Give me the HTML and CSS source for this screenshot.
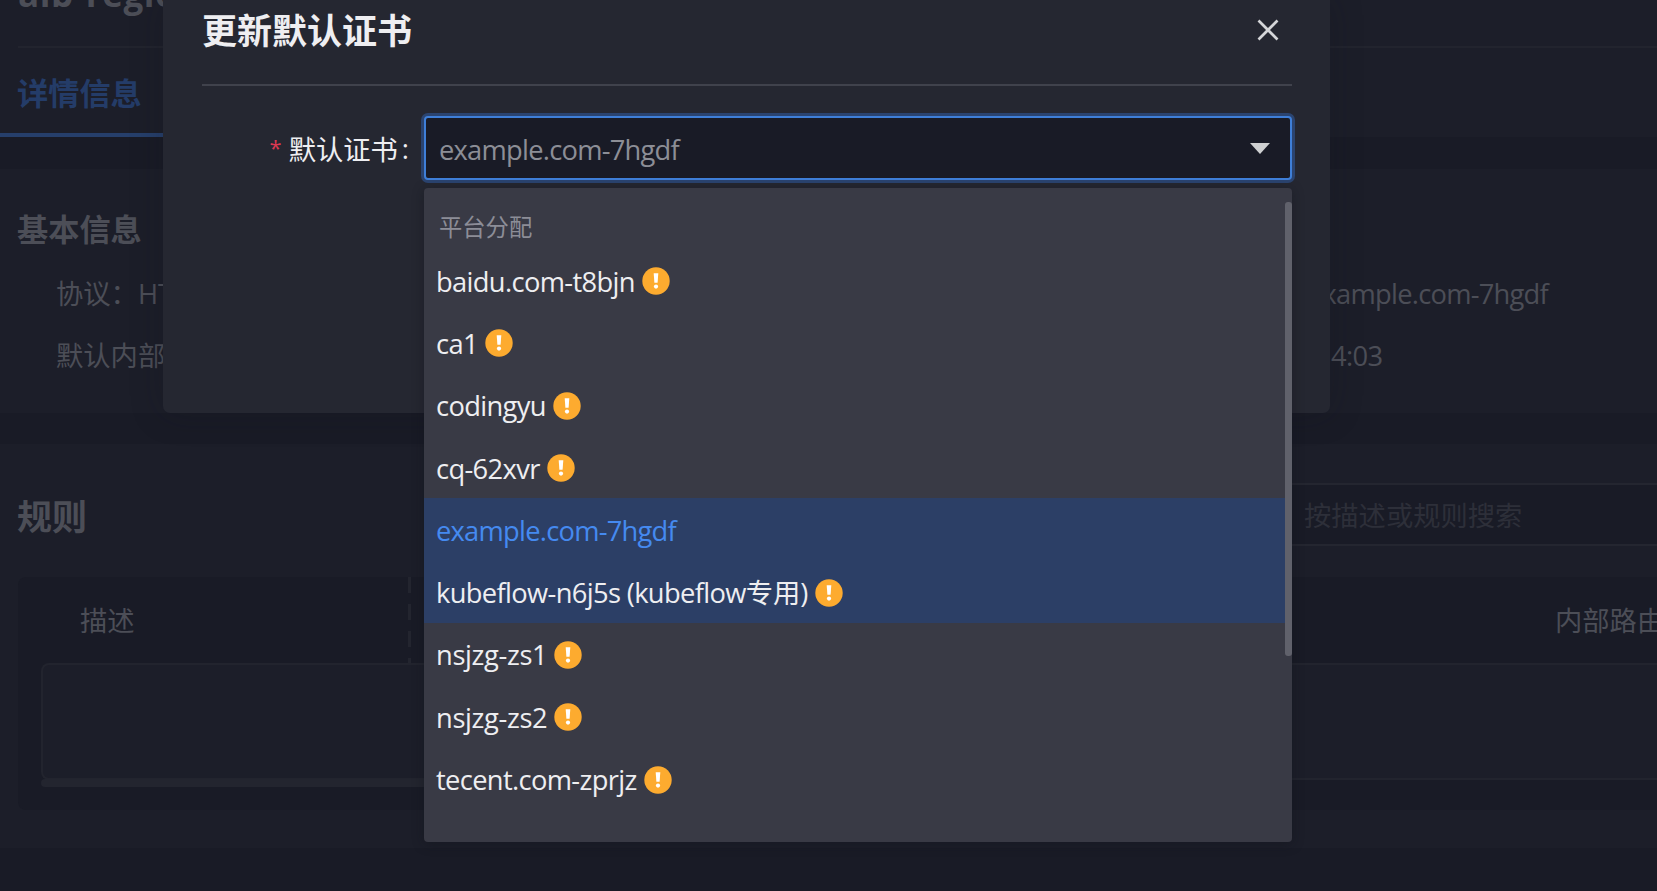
FILE: index.html
```html
<!DOCTYPE html>
<html lang="zh-CN">
<head>
<meta charset="utf-8">
<title>更新默认证书</title>
<link rel="stylesheet" href="styles.css">
</head>
<body>
<svg width="0" height="0" class="defs"><defs>
<symbol id="warn" viewBox="0 0 28 28"><circle cx="14" cy="14" r="13.7" fill="#fdab2f"/><path d="M11.7 6.3h4.6l-.7 9.4h-3.2z" fill="#fff"/><circle cx="14" cy="19.6" r="2.1" fill="#fff"/></symbol>
</defs></svg>
<div class="page">
  <section class="panel head">
    <h1 class="name">alb-regio</h1>
    <nav class="tabs"><span class="tab">详情信息</span></nav>
  </section>
  <section class="panel info">
    <h2 class="section-title">基本信息</h2>
    <div class="fields">
      <div class="field"><span>协议：</span><span>HT</span></div>
      <div class="field right"><span class="latin host">example.com-7hgdf</span></div>
      <div class="field">默认内部</div>
      <div class="field right time"><span class="latin">4:03</span></div>
    </div>
  </section>
  <section class="panel rules">
    <div class="rules-bar">
      <h2 class="rules-title">规则</h2>
      <div class="search">按描述或规则搜索</div>
    </div>
    <div class="table">
      <div class="table-head"><span class="col-desc">描述</span><span class="col-route">内部路由</span></div>
      <div class="table-body"></div>
      <div class="track"></div>
    </div>
  </section>
</div>
<div class="modal">
  <header class="modal-head">
    <h2 class="modal-title">更新默认证书</h2>
    <svg class="close" viewBox="0 0 24 24"><path d="M2.5 2.5l19 19M21.5 2.5l-19 19"/></svg>
  </header>
  <div class="form-row">
    <label class="label"><span class="star">*</span><span>默认证书</span><span class="colon">:</span></label>
    <div class="select"><span class="latin host">example.com-7hgdf</span><svg class="caret" viewBox="0 0 20 11"><path d="M0 0h20L10 11z"/></svg></div>
  </div>
</div>
<div class="menu">
  <div class="group">平台分配</div>
  <div class="item"><span class="latin">baidu.com-t8bjn</span><svg class="warn"><use href="#warn"/></svg></div>
  <div class="item"><span class="latin">ca1</span><svg class="warn"><use href="#warn"/></svg></div>
  <div class="item"><span class="latin">codingyu</span><svg class="warn"><use href="#warn"/></svg></div>
  <div class="item"><span class="latin">cq-62xvr</span><svg class="warn"><use href="#warn"/></svg></div>
  <div class="item active selected"><span class="latin host">example.com-7hgdf</span></div>
  <div class="item active"><span class="latin">kubeflow-n6j5s (kubeflow<span class="cjk">专用</span>)</span><svg class="warn"><use href="#warn"/></svg></div>
  <div class="item"><span class="latin loose">nsjzg-zs1</span><svg class="warn"><use href="#warn"/></svg></div>
  <div class="item"><span class="latin loose">nsjzg-zs2</span><svg class="warn"><use href="#warn"/></svg></div>
  <div class="item"><span class="latin">tecent.com-zprjz</span><svg class="warn"><use href="#warn"/></svg></div>
  <div class="thumb"></div>
</div>
</body>
</html>
```
FILE: styles.css
```css
* { box-sizing: border-box; }
body {
  margin: 0;
  width: 1657px;
  height: 891px;
  overflow: hidden;
  position: relative;
  background: #191b26;
  font-family: "Open Sans", "Noto Sans CJK SC", sans-serif;
  font-size: 27.3px;
  color: #4c4e57;
}
h1, h2 { margin: 0; font-weight: 700; white-space: nowrap; }
.defs { position: absolute; }
.latin { letter-spacing: -0.65px; white-space: nowrap; }
.host { letter-spacing: -0.75px; }
.loose { letter-spacing: -0.35px; }
.cjk { letter-spacing: 0; line-height: 0; }

.page { display: flex; flex-direction: column; height: 891px; overflow: hidden; }
.panel { background: #1c1e29; flex: none; }
.head { height: 137px; margin-bottom: 32px; display: flex; flex-direction: column; }
.name { flex: none; height: 54px; margin: -6px 0 0 18px; padding-bottom: 52px; border-bottom: 2px solid #22242e; font-size: 35px; line-height: 0; letter-spacing: 0.6px; }
.tabs { height: 89px; display: flex; }
.tab { width: 163px; padding-left: 17px; border-bottom: 4px solid #263f6b; color: #243c68; font-size: 31.2px; font-weight: 700; line-height: 91px; height: 89px; white-space: nowrap; }

.info { height: 244px; margin-bottom: 31px; padding: 30px 0 0 18px; }
.section-title { font-size: 31.2px; line-height: 61px; height: 62px; margin-left: -1px; }
.fields { display: grid; grid-template-columns: 1252px 1fr; grid-auto-rows: 62px; padding: 2px 0 0 38px; }
.field { line-height: 62px; white-space: nowrap; }
.time { padding-left: 23px; }

.rules { height: 404px; padding: 39px 0 38px 18px; display: flex; flex-direction: column; }
.rules-bar { display: flex; height: 63px; margin-bottom: 31px; justify-content: space-between; align-items: center; }
.rules-title { font-size: 35px; line-height: 63px; padding-top: 3px; margin-left: -1px; }
.search { width: 373px; height: 63px; padding-left: 20px; border: 2px solid #242630; border-width: 2px 0; background: #191b26; color: #2d2f39; line-height: 62px; }
.table { height: 233px; background: #191b26; border-radius: 8px 0 0 8px; padding-left: 23px; }
.table-head { height: 86px; display: flex; justify-content: space-between; line-height: 88px; overflow: hidden; background: repeating-linear-gradient(to bottom, #23252f 0 16px, transparent 16px 27px) 367px 0 / 3px 100% no-repeat; }
.col-desc { padding-left: 39px; }
.col-route { width: 102px; white-space: nowrap; }
.table-body { height: 117px; background: #1c1e29; border: 2px solid #22242e; border-right: 0; border-radius: 8px 0 0 8px; }
.track { width: 500px; height: 8px; margin-top: -1px; border-radius: 4px; background: #23252f; }

.modal { position: absolute; left: 163px; top: 0; width: 1167px; height: 413px; padding: 0 38px 0 39px; background: #252731; border-radius: 0 0 7px 7px; box-shadow: 0 0 32px rgba(18, 20, 28, 0.25); color: #eeeef1; }
.modal-head { height: 86px; border-bottom: 2px solid #40424c; display: flex; justify-content: space-between; padding: 0 12px 0 0; }
.modal-title { font-size: 35px; line-height: 62px; }
.close { width: 24px; height: 24px; margin-top: 18px; fill: none; stroke: #d5d6d9; stroke-width: 2.7; }
.form-row { display: flex; margin-top: 30px; height: 64px; }
.label { width: 222px; display: flex; justify-content: flex-end; line-height: 67px; padding-right: 15px; white-space: nowrap; }
.star { color: #dc3852; font-size: 22px; margin-right: 7px; line-height: 63px; }
.colon { margin-left: 4px; line-height: 65px; }
.select { width: 868px; height: 64px; padding: 2px 20px 0 13px; display: flex; justify-content: space-between; align-items: center; border: 2.5px solid #3f7fd8; border-radius: 4px; box-shadow: 0 0 0 3px #2b4470; background: #191b26; color: #8c8e96; }
.caret { width: 20px; height: 11px; margin-top: -2px; fill: #ced0d1; }

.menu { position: absolute; left: 424px; top: 188px; width: 868px; height: 654px; padding-top: 15px; border-radius: 4px; background: #393a45; box-shadow: 0 2px 12px rgba(15, 17, 24, 0.4); color: #eeeef1; }
.group { height: 46px; padding-left: 15px; font-size: 23.3px; line-height: 48px; color: #8c8d97; }
.item { height: 62.3px; padding: 2px 0 0 12px; display: flex; align-items: center; gap: 7px; }
.active { background: #2c3f66; }
.selected { color: #458af0; }
.warn { width: 28px; height: 28px; flex: none; }
.thumb { position: absolute; right: 0; top: 14px; width: 7px; height: 454px; border-radius: 3px; background: #60616b; }
```
